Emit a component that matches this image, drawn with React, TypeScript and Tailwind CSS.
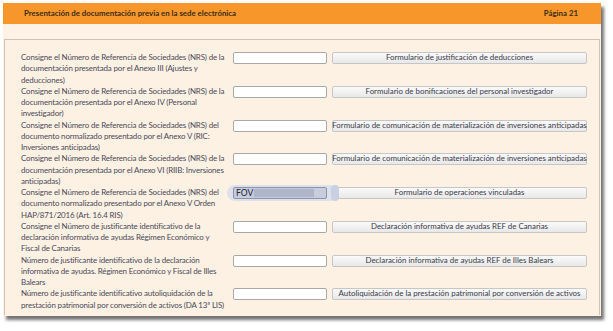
import React from "react";

interface Row {
  lines: string[];
  button: string;
  filled?: boolean;
}

const rows: Row[] = [
  {
    lines: [
      "Consigne el Número de Referencia de Sociedades (NRS) de la",
      "documentación presentada por el Anexo III (Ajustes y",
      "deducciones)",
    ],
    button: "Formulario de justificación de deducciones",
  },
  {
    lines: [
      "Consigne el Número de Referencia de Sociedades (NRS) de la",
      "documentación presentada por el Anexo IV (Personal",
      "investigador)",
    ],
    button: "Formulario de bonificaciones del personal investigador",
  },
  {
    lines: [
      "Consigne el Número de Referencia de Sociedades (NRS) del",
      "documento normalizado presentado por el Anexo V (RIC:",
      "Inversiones anticipadas)",
    ],
    button: "Formulario de comunicación de materialización de inversiones anticipadas",
  },
  {
    lines: [
      "Consigne el Número de Referencia de Sociedades (NRS) de la",
      "documentación presentada por el Anexo VI (RIIB: Inversiones",
      "anticipadas)",
    ],
    button: "Formulario de comunicación de materialización de inversiones anticipadas",
  },
  {
    lines: [
      "Consigne el Número de Referencia de Sociedades (NRS) del",
      "documento normalizado presentado por el Anexo V Orden",
      "HAP/871/2016 (Art. 16.4 RIS)",
    ],
    button: "Formulario de operaciones vinculadas",
    filled: true,
  },
  {
    lines: [
      "Consigne el Número de justificante identificativo de la",
      "declaración informativa de ayudas Régimen Económico y",
      "Fiscal de Canarias",
    ],
    button: "Declaración informativa de ayudas REF de Canarias",
  },
  {
    lines: [
      "Número de justificante identificativo de la declaración",
      "informativa de ayudas. Régimen Económico y Fiscal de Illes",
      "Balears",
    ],
    button: "Declaración informativa de ayudas REF de Illes Balears",
  },
  {
    lines: [
      "Número de justificante identificativo autoliquidación de la",
      "prestación patrimonial por conversión de activos (DA 13ª LIS)",
    ],
    button: "Autoliquidación de la prestación patrimonial por conversión de activos",
  },
];

function NrsInput({ filled }: { filled?: boolean }) {
  if (!filled) {
    return <div className="h-[12px] w-[94px] shrink-0 rounded-[2px] border border-[#a8a8a8] bg-white" />;
  }
  return (
    <div className="relative h-[12px] w-[94px] shrink-0">
      {/* focus glow */}
      <div className="absolute -left-[6px] -top-[2px] h-[16px] w-[111px] rounded-full bg-[#dde1ec]" />
      <div className="absolute left-[98px] -top-[2px] h-[16px] w-[8px] rounded-full bg-[#c9d0e3]" />
      <div className="relative flex h-full w-full items-center rounded-[2px] border border-[#8d93a8] bg-[#c7cddd] pl-[2px] text-[8.5px] text-[#1e2233]">
        <span className="leading-none">FOV</span>
        <span className="ml-[1px] h-[8px] w-[60px] bg-[#afb5c8]" />
      </div>
    </div>
  );
}

export default function App() {
  return (
    <div className="h-[331px] w-[613px] bg-white pl-[3px] pt-[3px] font-['Lato','Open_Sans',sans-serif]">
      <div className="w-[598px] bg-[#fdf2e5] pb-[1px] shadow-[3px_4px_3px_rgba(0,0,0,0.55)]">
        <div className="flex h-[21px] items-center justify-between bg-[#f7972b] pl-[21px] pr-[23px] text-[7.85px] font-bold text-[#3c2b16]">
          <span>Presentación de documentación previa en la sede electrónica</span>
          <span>Página 21</span>
        </div>
        <div className="pt-[15px]">
          <div className="ml-[1px] mr-[1px] border border-b-0 border-[#cbc3b8] bg-[#fdf1e4] pb-[4px] pl-[16px] pt-[12px]">
            {rows.map((row, i) => (
              <div key={i} className="flex items-start">
                <div className="w-[212px] shrink-0 whitespace-nowrap text-[7.95px] leading-[11.25px] tracking-[-0.15px] text-[#4a4a58]">
                  {row.lines.map((l, j) => (
                    <div key={j}>{l}</div>
                  ))}
                </div>
                <NrsInput filled={row.filled} />
                <button className="ml-[5px] flex h-[12px] w-[255px] shrink-0 items-center justify-center whitespace-nowrap rounded-[2px] border border-[#c6c6c6] bg-gradient-to-b from-[#fafafa] to-[#e8e8e8] text-[7.9px] leading-none text-[#3a3a48]">
                  {row.button}
                </button>
              </div>
            ))}
          </div>
        </div>
      </div>
    </div>
  );
}
